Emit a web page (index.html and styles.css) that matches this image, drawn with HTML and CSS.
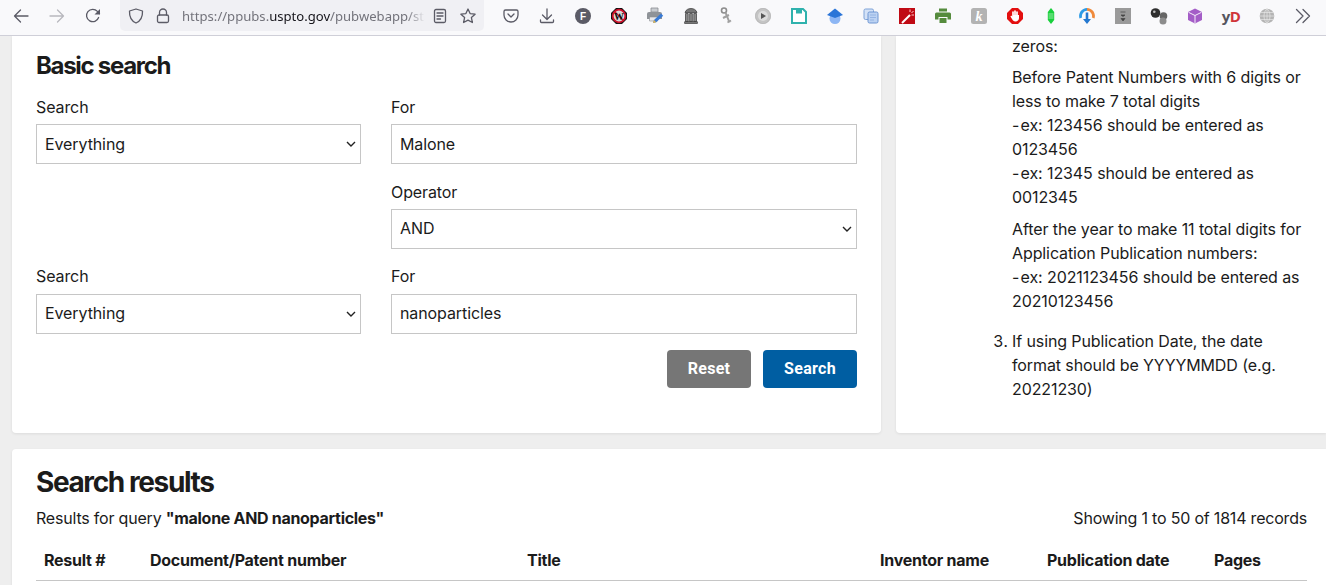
FILE: index.html
```html
<!DOCTYPE html>
<html lang="en">
<head>
<meta charset="utf-8">
<title>Patent Public Search</title>
<link rel="stylesheet" href="styles.css">
</head>
<body>
<header class="toolbar">
  <div class="nav">
    <span class="slot"><svg class="ico" viewBox="0 0 16 16"><path class="ln" d="M15 8H1.500M7.500 2 1.500 8l6 6"/></svg></span>
    <span class="slot"><svg class="ico faded" viewBox="0 0 16 16"><path class="ln" d="M1 8h13.500M8.500 2l6 6-6 6"/></svg></span>
    <span class="slot"><svg class="ico" viewBox="0 0 16 16"><path class="ln" d="M13.600 9.500A6.200 6.200 0 1 1 12.400 3.400L14.500 5.500"/><path class="dk" d="M15 1v5.500H9.500z"/></svg></span>
  </div>
  <div class="urlbar">
    <svg class="ico shield" viewBox="0 0 16 16"><path class="ln" d="M8 1 14.500 3C14.800 9 12.500 13 8 15 3.500 13 1.200 9 1.500 3z"/></svg>
    <svg class="ico lock" viewBox="0 0 16 16"><path class="ln" d="M4.500 7V4.500a3.500 3.500 0 0 1 7 0V7"/><rect class="ln" x="2.500" y="7" width="11" height="7.500" rx="1.500"/></svg>
    <span class="url"><span>https://ppubs.</span><b>uspto.gov</b><span>/pubwebapp/sta</span></span>
    <svg class="ico reader" viewBox="0 0 16 16"><rect class="ln" x="2.500" y="1.500" width="11" height="13" rx="1.500"/><path class="ln" d="M5 5h6M5 8h6M5 11h3.500"/></svg>
    <svg class="ico star" viewBox="0 0 16 16"><path class="ln" d="m8 1 2.100 4.600 5 .6-3.700 3.400 1 4.900L8 12.100l-4.400 2.400 1-4.900L.9 6.200l5-.6z"/></svg>
  </div>
  <div class="extensions">
    <span class="slot"><svg class="ico" viewBox="0 0 16 16"><path class="ln" d="M2.500 2h11A1.500 1.500 0 0 1 15 3.500V7a7 7 0 0 1-14 0V3.500A1.500 1.500 0 0 1 2.500 2z"/><path class="ln" d="M5 6l3 3 3-3"/></svg></span>
    <span class="slot"><svg class="ico" viewBox="0 0 16 16"><path class="ln" d="M8 1v10M3.500 7 8 11.500 12.500 7M1.500 12v1.500a1 1 0 0 0 1 1h11a1 1 0 0 0 1-1V12"/></svg></span>
    <span class="slot"><svg class="ico" viewBox="0 0 16 16"><circle cx="8" cy="8" r="8" fill="#5b5b66"/><text x="8" y="11.800" class="t-f">F</text></svg></span>
    <span class="slot"><svg class="ico" viewBox="0 0 16 16"><path d="M5 0h6l5 5v6l-5 5H5l-5-5V5z" fill="#111"/><circle cx="8" cy="8" r="6.300" fill="#d8d8d8" stroke="#d0102a" stroke-width="1.800"/><path d="m3.500 3.500 9 9" stroke="#d0102a" stroke-width="1.200"/><text x="8" y="11.500" class="t-w">W</text></svg></span>
    <span class="slot"><svg class="ico big" viewBox="0 0 18 18"><path d="M5 1h7v4H5z" fill="#c9ccd0" stroke="#8a8d92" stroke-width=".8"/><path d="M1 7a2 2 0 0 1 2-2h11a2 2 0 0 1 2 2v5H1z" fill="#8f9398"/><path d="M3.500 10h8v4h-8z" fill="#e8e8ea" stroke="#8a8d92" stroke-width=".6"/><path d="m7 16 1-3 7-6.500 2.200 2.200-7 6.500z" fill="#3a7bd5"/><path d="m7 16 1-3 2.200 2.200z" fill="#e8b84a"/></svg></span>
    <span class="slot"><svg class="ico" viewBox="0 0 16 16"><path d="M2 4.500C3 1.500 5.500.5 8 .5s5 1 6 4z" fill="#777" stroke="#333" stroke-width=".7"/><path d="M2.500 5.500h2.700v8H2.500zM6.650 5.500h2.700v8h-2.700zM10.800 5.500h2.700v8h-2.700z" fill="#8a8a8a" stroke="#333" stroke-width=".7"/><rect x="1.500" y="13.500" width="13" height="2.200" rx=".6" fill="#777" stroke="#333" stroke-width=".6"/></svg></span>
    <span class="slot"><svg class="ico big" viewBox="0 0 18 18"><circle cx="6" cy="3.500" r="2.500" fill="none" stroke="#8d8d8d" stroke-width="1.600"/><path d="m7.500 5.500 4 10M11 8 5 11M13 13.500l-3.500 2" fill="none" stroke="#a0a0a0" stroke-width="2"/></svg></span>
    <span class="slot"><svg class="ico" viewBox="0 0 16 16"><circle cx="8" cy="8" r="7.700" fill="#c4c4c4" stroke="#a6a6a6" stroke-width=".6"/><circle cx="8" cy="8" r="5" fill="#dcdcdc"/><path d="M6 5l5 3-5 3z" fill="#555"/></svg></span>
    <span class="slot"><svg class="ico" viewBox="0 0 16 16"><path d="M1 1h11l3 3v11H1z" fill="#fff" stroke="#2fb2ad" stroke-width="2"/><path d="M5 1h6v4.500H5z" fill="#2fb2ad"/></svg></span>
    <span class="slot"><svg class="ico big" viewBox="0 0 18 18"><circle cx="9" cy="11.500" r="5.500" fill="#8db6f4"/><path d="M9 1.500 17 8 9 11 1 8z" fill="#2a75d8"/></svg></span>
    <span class="slot"><svg class="ico" viewBox="0 0 16 16"><rect x="1" y="1" width="9.500" height="10.500" rx="1.500" fill="#d4e2f7" stroke="#7fa3d8"/><rect x="5" y="4" width="10" height="11" rx="1.500" fill="#bcd2f2" stroke="#6f96d2"/><path d="M7 7h6M7 9.500h6M7 12h4" stroke="#8bace0" stroke-width=".8"/></svg></span>
    <span class="slot"><svg class="ico" viewBox="0 0 16 16"><rect width="16" height="16" fill="#c00a14"/><path d="m3 15 8-8" stroke="#fff" stroke-width="2"/><path d="M11 1.500v2.500M14.500 3 12.500 5M15 7h-2.500" stroke="#ffc9c9"/></svg></span>
    <span class="slot"><svg class="ico big" viewBox="0 0 18 18"><path d="M5 1.500h8v3H5zM2.500 5.500h13A1.500 1.500 0 0 1 17 7v5.500h-3.500V10h-9v2.500H1V7a1.500 1.500 0 0 1 1.500-1.500zM5.500 11h7v5h-7z" fill="#558b3d"/></svg></span>
    <span class="slot"><svg class="ico" viewBox="0 0 16 16"><rect width="16" height="16" rx="2.500" fill="#b3b3b3"/><text x="8" y="12.800" class="t-k">k</text></svg></span>
    <span class="slot"><svg class="ico" viewBox="0 0 16 16"><path d="M5 0h6l5 5v6l-5 5H5l-5-5V5z" fill="#e30f0f"/><path d="M6 9V4M8 8V3M10 8V4" stroke="#fff" stroke-width="1.700" stroke-linecap="round"/><path d="M12 5.500V10c0 2-1.300 3.500-3.500 3.500-1.800 0-2.700-1-3.500-2.500L3.600 8.700c-.4-.8.700-1.500 1.300-.7L6 9V7h6z" fill="#fff"/></svg></span>
    <span class="slot"><svg class="ico" viewBox="0 0 16 16"><path d="M8 0l3.200 4v8L8 16l-3.200-4V4z" fill="#19d03c"/><path d="M5.500 6h5M5.500 8h5M5.500 10h5" stroke="#b8f0c0" stroke-width=".8"/></svg></span>
    <span class="slot"><svg class="ico big" viewBox="0 0 18 18"><path d="M9 1a8 8 0 0 0-7.500 10.500l2.600-1A5.300 5.300 0 0 1 9 3.800z" fill="#2e9be6"/><path d="M9 1a8 8 0 0 1 7.500 10.500l-2.600-1A5.300 5.300 0 0 0 9 3.800z" fill="#ef8a3c"/><path d="M7.700 5.500h2.600v6.500h2.700L9 17l-4-5h2.700z" fill="#2478d0"/></svg></span>
    <span class="slot"><svg class="ico" viewBox="0 0 16 16"><rect width="16" height="16" fill="#9a9a9a"/><path d="M5.500 4h5M6 7h4l-2 1.500zM6 10.500h4L8 13z" stroke="#444" stroke-width=".7" fill="#444"/></svg></span>
    <span class="slot"><svg class="ico big" viewBox="0 0 18 18"><circle cx="5.500" cy="6" r="4.800" fill="#2e2e2e"/><circle cx="4.300" cy="4.700" r="1.300" fill="#bbb"/><circle cx="13.500" cy="9" r="3.800" fill="#666"/><circle cx="13" cy="14" r="3.500" fill="#8c8c8c"/></svg></span>
    <span class="slot"><svg class="ico" viewBox="0 0 16 16"><path d="M8 .500 15 4v8l-7 3.500L1 12V4z" fill="#a45dc7"/><path d="M1.500 4.300 8 7.500l6.500-3.200M8 7.500v7.500" fill="none" stroke="#f6eefa" stroke-width="1"/></svg></span>
    <span class="slot"><span class="yd"><span class="yd-y">y</span><span class="yd-d">D</span></span></span>
    <span class="slot"><svg class="ico" viewBox="0 0 16 16"><circle cx="8" cy="8" r="7.300" fill="#b4b4b4"/><path d="M.7 8h14.600M1.700 4.500h12.600M1.700 11.500h12.600M8 .7v14.600M8 .7C4 4 4 12 8 15.300M8 .7c4 3.300 4 11.300 0 14.600" fill="none" stroke="#e6e6e6" stroke-width=".7"/></svg></span>
    <span class="slot"><svg class="ico" viewBox="0 0 16 16"><path class="ln" d="m1.500 1.500 6.500 6.500-6.500 6.500M8 1.500l6.500 6.500L8 14.500"/></svg></span>
  </div>
</header>

<main class="page">
  <div class="top-row">
    <section class="card search-card">
      <h2 class="h-basic">Basic search</h2>
      <form class="search-form">
        <div class="field">
          <label class="lbl" for="s1">Search</label>
          <div class="select-wrap">
            <select id="s1" class="ctl"><option>Everything</option></select>
            <svg class="chev" viewBox="0 0 10 6"><path d="m1 1 4 4 4-4"/></svg>
          </div>
        </div>
        <div class="field">
          <label class="lbl" for="f1">For</label>
          <input id="f1" class="ctl" type="text" value="Malone">
        </div>
        <div class="field col-2">
          <label class="lbl" for="op">Operator</label>
          <div class="select-wrap">
            <select id="op" class="ctl ctl-up"><option>AND</option></select>
            <svg class="chev" viewBox="0 0 10 6"><path d="m1 1 4 4 4-4"/></svg>
          </div>
        </div>
        <div class="field">
          <label class="lbl lbl-up" for="s2">Search</label>
          <div class="select-wrap">
            <select id="s2" class="ctl ctl-up"><option>Everything</option></select>
            <svg class="chev" viewBox="0 0 10 6"><path d="m1 1 4 4 4-4"/></svg>
          </div>
        </div>
        <div class="field">
          <label class="lbl lbl-up" for="f2">For</label>
          <input id="f2" class="ctl ctl-up" type="text" value="nanoparticles">
        </div>
        <div class="actions">
          <button type="button" class="btn btn-reset">Reset</button>
          <button type="button" class="btn btn-search">Search</button>
        </div>
      </form>
    </section>
    <aside class="card help-card">
      <ol class="help-list" start="2">
        <li class="help-item continued">
          <p class="help-p first">zeros:</p>
          <p class="help-p">Before Patent Numbers with 6 digits or<br>less to make 7 total digits<br>-&#8202;ex: 123456 should be entered as<br>0123456<br>-&#8202;ex: 12345 should be entered as<br>0012345</p>
          <p class="help-p">After the year to make 11 total digits for<br>Application Publication numbers:<br>-&#8202;ex: 2021123456 should be entered as<br>20210123456</p>
        </li>
        <li class="help-item">If using Publication Date, the date<br>format should be YYYYMMDD (e.g.<br>20221230)</li>
      </ol>
    </aside>
  </div>
  <section class="card results-card">
    <h2 class="h-results">Search results</h2>
    <div class="summary">
      <span>Results for query <b>"malone AND nanoparticles"</b></span>
      <span>Showing 1 to 50 of 1814 records</span>
    </div>
    <table class="results">
      <thead>
        <tr>
          <th class="c-num">Result #</th>
          <th class="c-doc">Document/Patent number</th>
          <th class="c-title">Title</th>
          <th class="c-inv">Inventor name</th>
          <th class="c-date">Publication date</th>
          <th class="c-pages">Pages</th>
        </tr>
      </thead>
    </table>
  </section>
</main>
</body>
</html>
```
FILE: styles.css
```css
* { box-sizing: border-box; }
html, body { margin: 0; height: 100%; overflow: hidden; }
body {
  background: #eeeeee;
  color: #1b1b1b;
  font: 16px/24px "Inter", "Liberation Sans", sans-serif;
  letter-spacing: -0.1px;
}

/* Browser chrome */
.toolbar {
  position: relative;
  z-index: 2;
  display: flex;
  height: 36px;
  padding-left: 3px;
  background: #f9f9fb;
  border-bottom: 1px solid #cfcfd8;
  letter-spacing: 0;
}
.nav, .extensions { display: flex; }
.extensions { margin-left: 9px; }
.slot {
  display: flex;
  align-items: center;
  justify-content: center;
  width: 36px;
  height: 31px;
}
.ico { display: block; width: 16px; height: 16px; flex: none; }
.ico.big { width: 18px; height: 18px; }
.ln { fill: none; stroke: #5b5b66; stroke-width: 1.300; stroke-linejoin: round; stroke-linecap: round; }
.dk { fill: #5b5b66; }
.faded .ln { stroke: #b8b8be; }
.urlbar {
  display: flex;
  align-items: center;
  width: 364px;
  height: 31px;
  margin-left: 9px;
  background: #f0f0f4;
  border-radius: 0 0 5px 5px;
}
.shield { margin-left: 8px; }
.lock { margin-left: 11px; }
.url {
  width: 243px;
  margin-left: 11px;
  white-space: nowrap;
  font: 13.100px/20px "Noto Sans", sans-serif;
  color: #73737b;
  -webkit-mask-image: linear-gradient(to right, #000 225px, transparent 243px);
  mask-image: linear-gradient(to right, #000 225px, transparent 243px);
}
.url b { font-weight: 400; color: #15141a; }
.reader { margin-left: 7px; }
.star { margin-left: 12px; }
.t-f { font: 700 10px "Liberation Sans", sans-serif; fill: #fff; text-anchor: middle; }
.t-w { font: 700 10px "Liberation Serif", serif; fill: #111; text-anchor: middle; }
.t-k { font: italic 700 14px "Liberation Serif", serif; fill: #fff; text-anchor: middle; }
.yd { font: 700 15px/16px "Open Sans", sans-serif; letter-spacing: -0.5px; }
.yd-y { color: #55555e; }
.yd-d { color: #d0343a; }

/* Page */
.page { padding-left: 12px; }
.top-row {
  display: grid;
  grid-template-columns: 869px 1fr;
  gap: 15px;
  height: 397px;
}
.card {
  background: #fff;
  border-radius: 4px;
  box-shadow: 0 1px 3px rgba(0, 0, 0, .08);
}
.search-card {
  padding: 15px 24px 0;
  border-radius: 0 0 4px 4px;
}
.help-card { border-radius: 0 0 0 4px; }
.h-basic {
  margin: 0 0 14px;
  font-size: 24px;
  line-height: 30px;
  font-weight: 700;
  letter-spacing: -1.300px;
}
.search-form {
  display: grid;
  grid-template-columns: 325px 466px;
  column-gap: 30px;
  row-gap: 16px;
}
.col-2, .actions { grid-column: 2; }
.field { min-width: 0; }
.lbl { display: block; margin-bottom: 5px; }
.lbl-up { margin-top: -1px; margin-bottom: 6px; }
.select-wrap { position: relative; }
.ctl {
  display: block;
  width: 100%;
  height: 40px;
  padding: 0 8px;
  border: 1px solid #c6c6c6;
  border-radius: 0;
  background: #fff;
  color: #1b1b1b;
  font: inherit;
  letter-spacing: -0.1px;
  appearance: none;
  -webkit-appearance: none;
  outline: 0;
}
.ctl-up { padding-bottom: 2px; }
.chev {
  position: absolute;
  top: 17px;
  right: 5px;
  width: 10px;
  height: 6px;
  fill: none;
  stroke: #222;
  stroke-width: 1.400;
}
.actions {
  display: flex;
  justify-content: flex-end;
  gap: 12px;
}
.btn {
  height: 38px;
  border: 0;
  border-radius: 4px;
  color: #fff;
  font: 700 16px/24px "Roboto", sans-serif;
  letter-spacing: .3px;
}
.btn-reset { width: 84px; background: #767676; }
.btn-search { width: 94px; background: #005ea2; }

/* Help text */
.help-list {
  margin: -2px 0 0;
  padding: 0 0 0 116px;
}
.help-item { margin-bottom: 16px; white-space: nowrap; }
.continued { list-style: none; }
.help-p { margin: 0 0 8px; }
.help-p.first { margin-bottom: 7px; }

/* Results */
.results-card {
  margin-top: 16px;
  height: 200px;
  padding: 16px 19px 0 24px;
  border-radius: 4px 0 0 4px;
}
.h-results {
  margin: 0 0 7px;
  font-size: 28px;
  line-height: 34px;
  font-weight: 700;
  letter-spacing: -1.400px;
}
.summary { display: flex; justify-content: space-between; letter-spacing: -0.2px; }
.summary b { font-weight: 700; letter-spacing: -0.300px; }
.results {
  width: 100%;
  margin-top: 10px;
  border-collapse: collapse;
  table-layout: fixed;
}
.results th {
  height: 40px;
  padding: 0 8px;
  text-align: left;
  font-weight: 700;
  letter-spacing: -0.250px;
  border-bottom: 1px solid #c6c6c6;
}
.c-num { width: 106px; }
.c-doc { width: 377px; }
.c-title { width: 353px; }
.c-inv { width: 167px; }
.c-date { width: 167px; }
```
